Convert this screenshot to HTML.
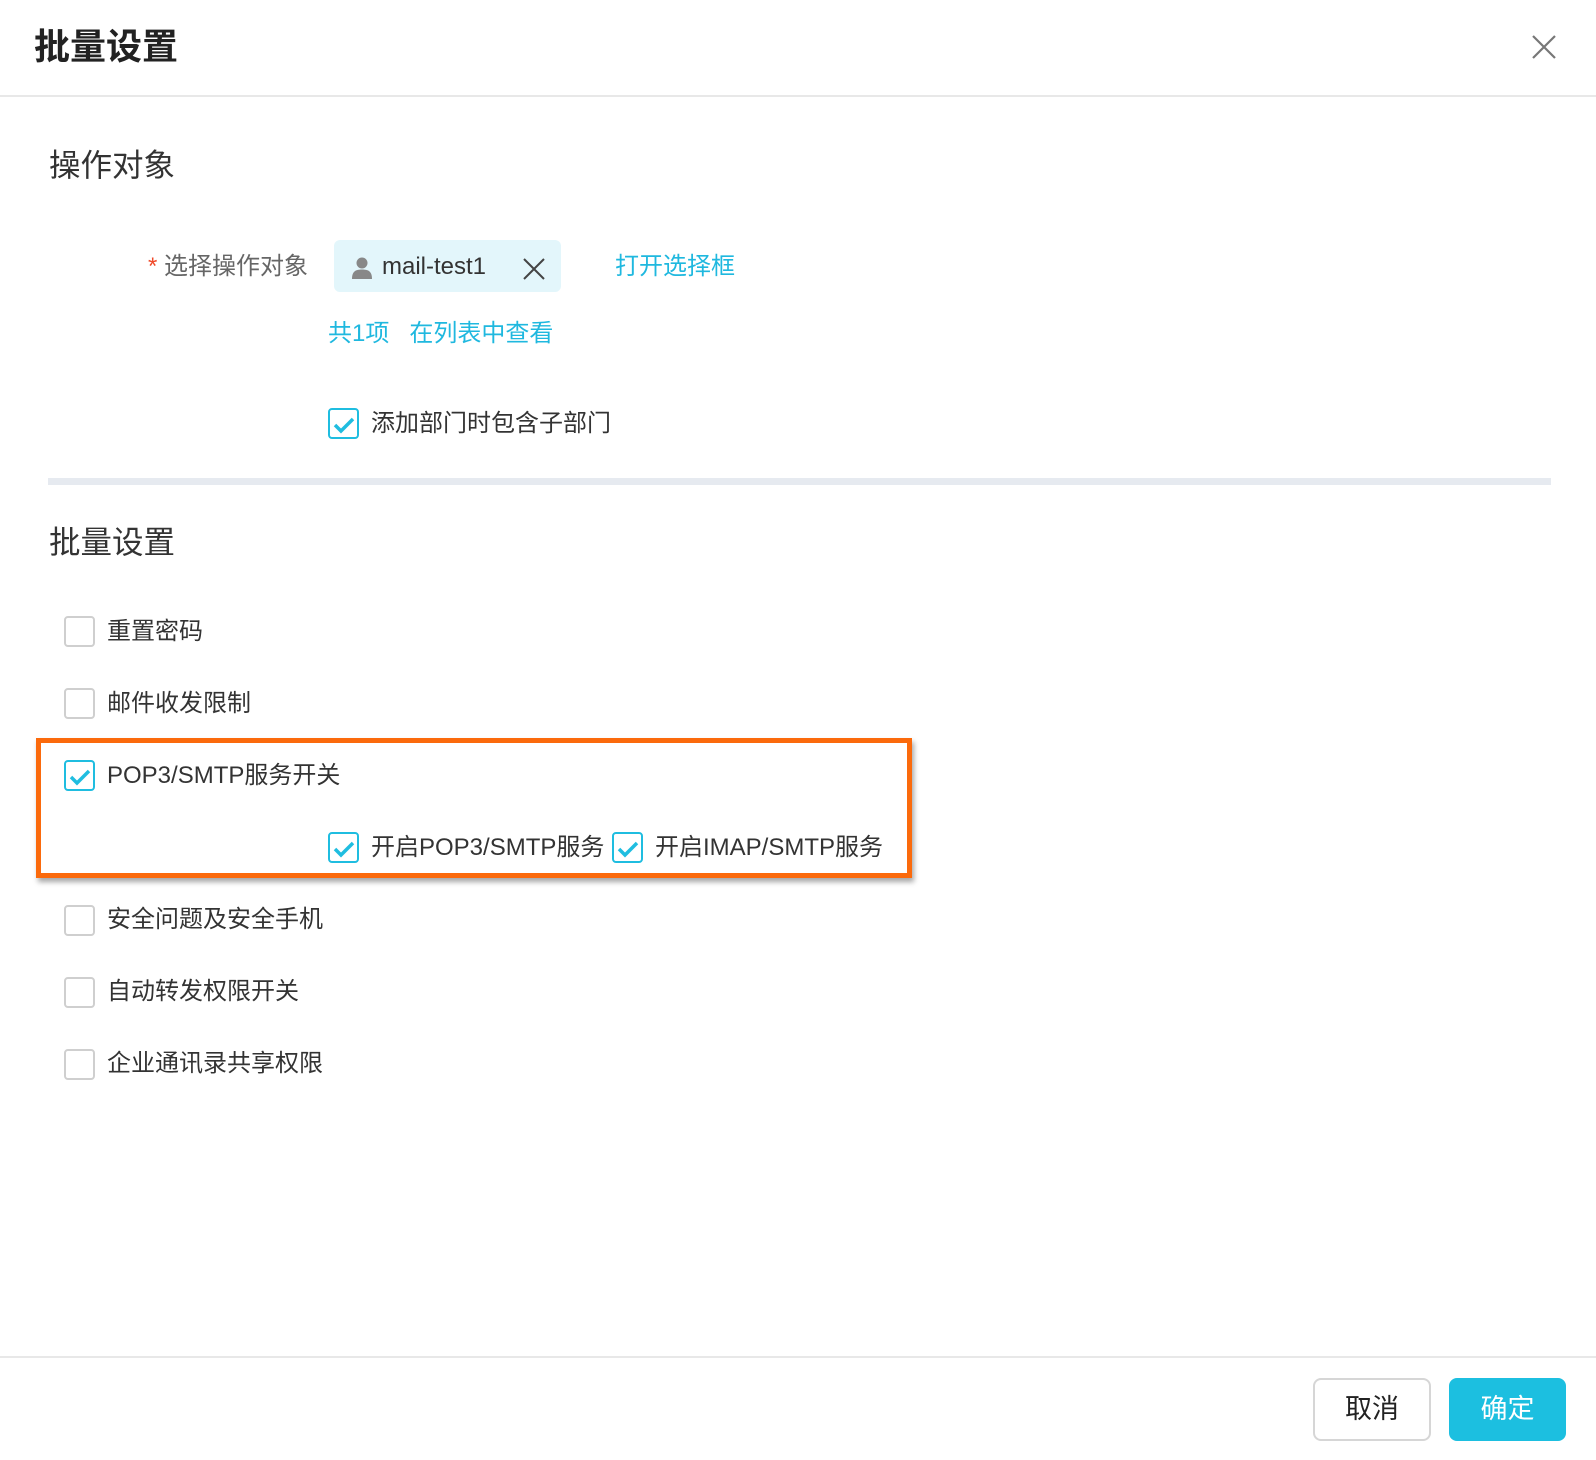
<!DOCTYPE html>
<html><head><meta charset="utf-8"><style>
*{margin:0;padding:0;box-sizing:border-box}
body{width:1596px;height:1460px;background:#fff;font-family:"Liberation Sans","Noto Sans CJK SC",sans-serif;position:relative;overflow:hidden;color:#333}
.a{position:absolute;white-space:nowrap}
.t{font-size:24px;line-height:32px}
.cb{position:absolute;width:31px;height:31px;border:2px solid #cfcfcf;border-radius:4px;background:#fff}
.cb.on{border-color:#1fbde0}
.cb.on svg{position:absolute;left:3px;top:6px}
.blue{color:#1fb8df}
</style></head><body>
<div class="a" style="left:34px;top:24px;font-size:36px;font-weight:bold;color:#222;line-height:46px">批量设置</div>
<svg class="a" style="left:1532px;top:35px" width="24" height="24"><path d="M1 1L23 23M23 1L1 23" stroke="#777" stroke-width="2.2"/></svg>
<div class="a" style="left:0;top:95px;width:1596px;height:2px;background:#e8e8e8"></div>

<div class="a" style="left:49px;top:147px;font-size:31.5px;line-height:36px;color:#333">操作对象</div>
<div class="a t" style="left:148px;top:251px;color:#666"><span style="color:#f04a2a">*</span> 选择操作对象</div>
<div class="a" style="left:334px;top:240px;width:227px;height:52px;background:#e3f6fb;border-radius:6px"></div>
<svg class="a" style="left:351px;top:257px" width="22" height="22"><circle cx="11" cy="6" r="5.5" fill="#888"/><path d="M1 22C1 14 5 12.5 11 12.5S21 14 21 22Z" fill="#888"/></svg>
<div class="a t" style="left:382px;top:252px;color:#333;font-size:24px;line-height:30px">mail-test1</div>
<svg class="a" style="left:523px;top:258px" width="22" height="22"><path d="M1 1L21 21M21 1L1 21" stroke="#444" stroke-width="2"/></svg>
<div class="a t blue" style="left:615px;top:251px">打开选择框</div>
<div class="a t blue" style="left:328px;top:318px">共1项 &nbsp;&nbsp;在列表中查看</div>
<div class="cb on" style="left:328px;top:408px"><svg width="22" height="18"><path d="M2 9L8 15L20 3" stroke="#1fbde0" stroke-width="3.5" fill="none"/></svg></div>
<div class="a t" style="left:371px;top:408px">添加部门时包含子部门</div>
<div class="a" style="left:48px;top:478px;width:1503px;height:7px;background:#e6eaf0"></div>

<div class="a" style="left:49px;top:524px;font-size:31.5px;line-height:36px;color:#333">批量设置</div>

<div class="cb" style="left:64px;top:616px"></div><div class="a t" style="left:107px;top:616px">重置密码</div>
<div class="cb" style="left:64px;top:688px"></div><div class="a t" style="left:107px;top:688px">邮件收发限制</div>

<div class="a" style="left:36px;top:738px;width:876px;height:140px;border:5px solid #fb6a0c;box-shadow:2px 4px 5px rgba(0,0,0,0.35)"></div>
<div class="cb on" style="left:64px;top:760px"><svg width="22" height="18"><path d="M2 9L8 15L20 3" stroke="#1fbde0" stroke-width="3.5" fill="none"/></svg></div>
<div class="a t" style="left:107px;top:760px">POP3/SMTP服务开关</div>
<div class="cb on" style="left:328px;top:832px"><svg width="22" height="18"><path d="M2 9L8 15L20 3" stroke="#1fbde0" stroke-width="3.5" fill="none"/></svg></div>
<div class="a t" style="left:371px;top:832px">开启POP3/SMTP服务</div>
<div class="cb on" style="left:612px;top:832px"><svg width="22" height="18"><path d="M2 9L8 15L20 3" stroke="#1fbde0" stroke-width="3.5" fill="none"/></svg></div>
<div class="a t" style="left:655px;top:832px">开启IMAP/SMTP服务</div>

<div class="cb" style="left:64px;top:905px"></div><div class="a t" style="left:107px;top:904px">安全问题及安全手机</div>
<div class="cb" style="left:64px;top:977px"></div><div class="a t" style="left:107px;top:976px">自动转发权限开关</div>
<div class="cb" style="left:64px;top:1049px"></div><div class="a t" style="left:107px;top:1048px">企业通讯录共享权限</div>

<div class="a" style="left:0;top:1356px;width:1596px;height:2px;background:#e8e8e8"></div>
<div class="a" style="left:1313px;top:1378px;width:118px;height:63px;border:2px solid #d6d6d6;border-radius:8px;font-size:27px;line-height:59px;text-align:center;color:#222">取消</div>
<div class="a" style="left:1449px;top:1378px;width:117px;height:63px;background:#1cbfe0;border-radius:8px;font-size:27px;line-height:63px;text-align:center;color:#fff">确定</div>
</body></html>
